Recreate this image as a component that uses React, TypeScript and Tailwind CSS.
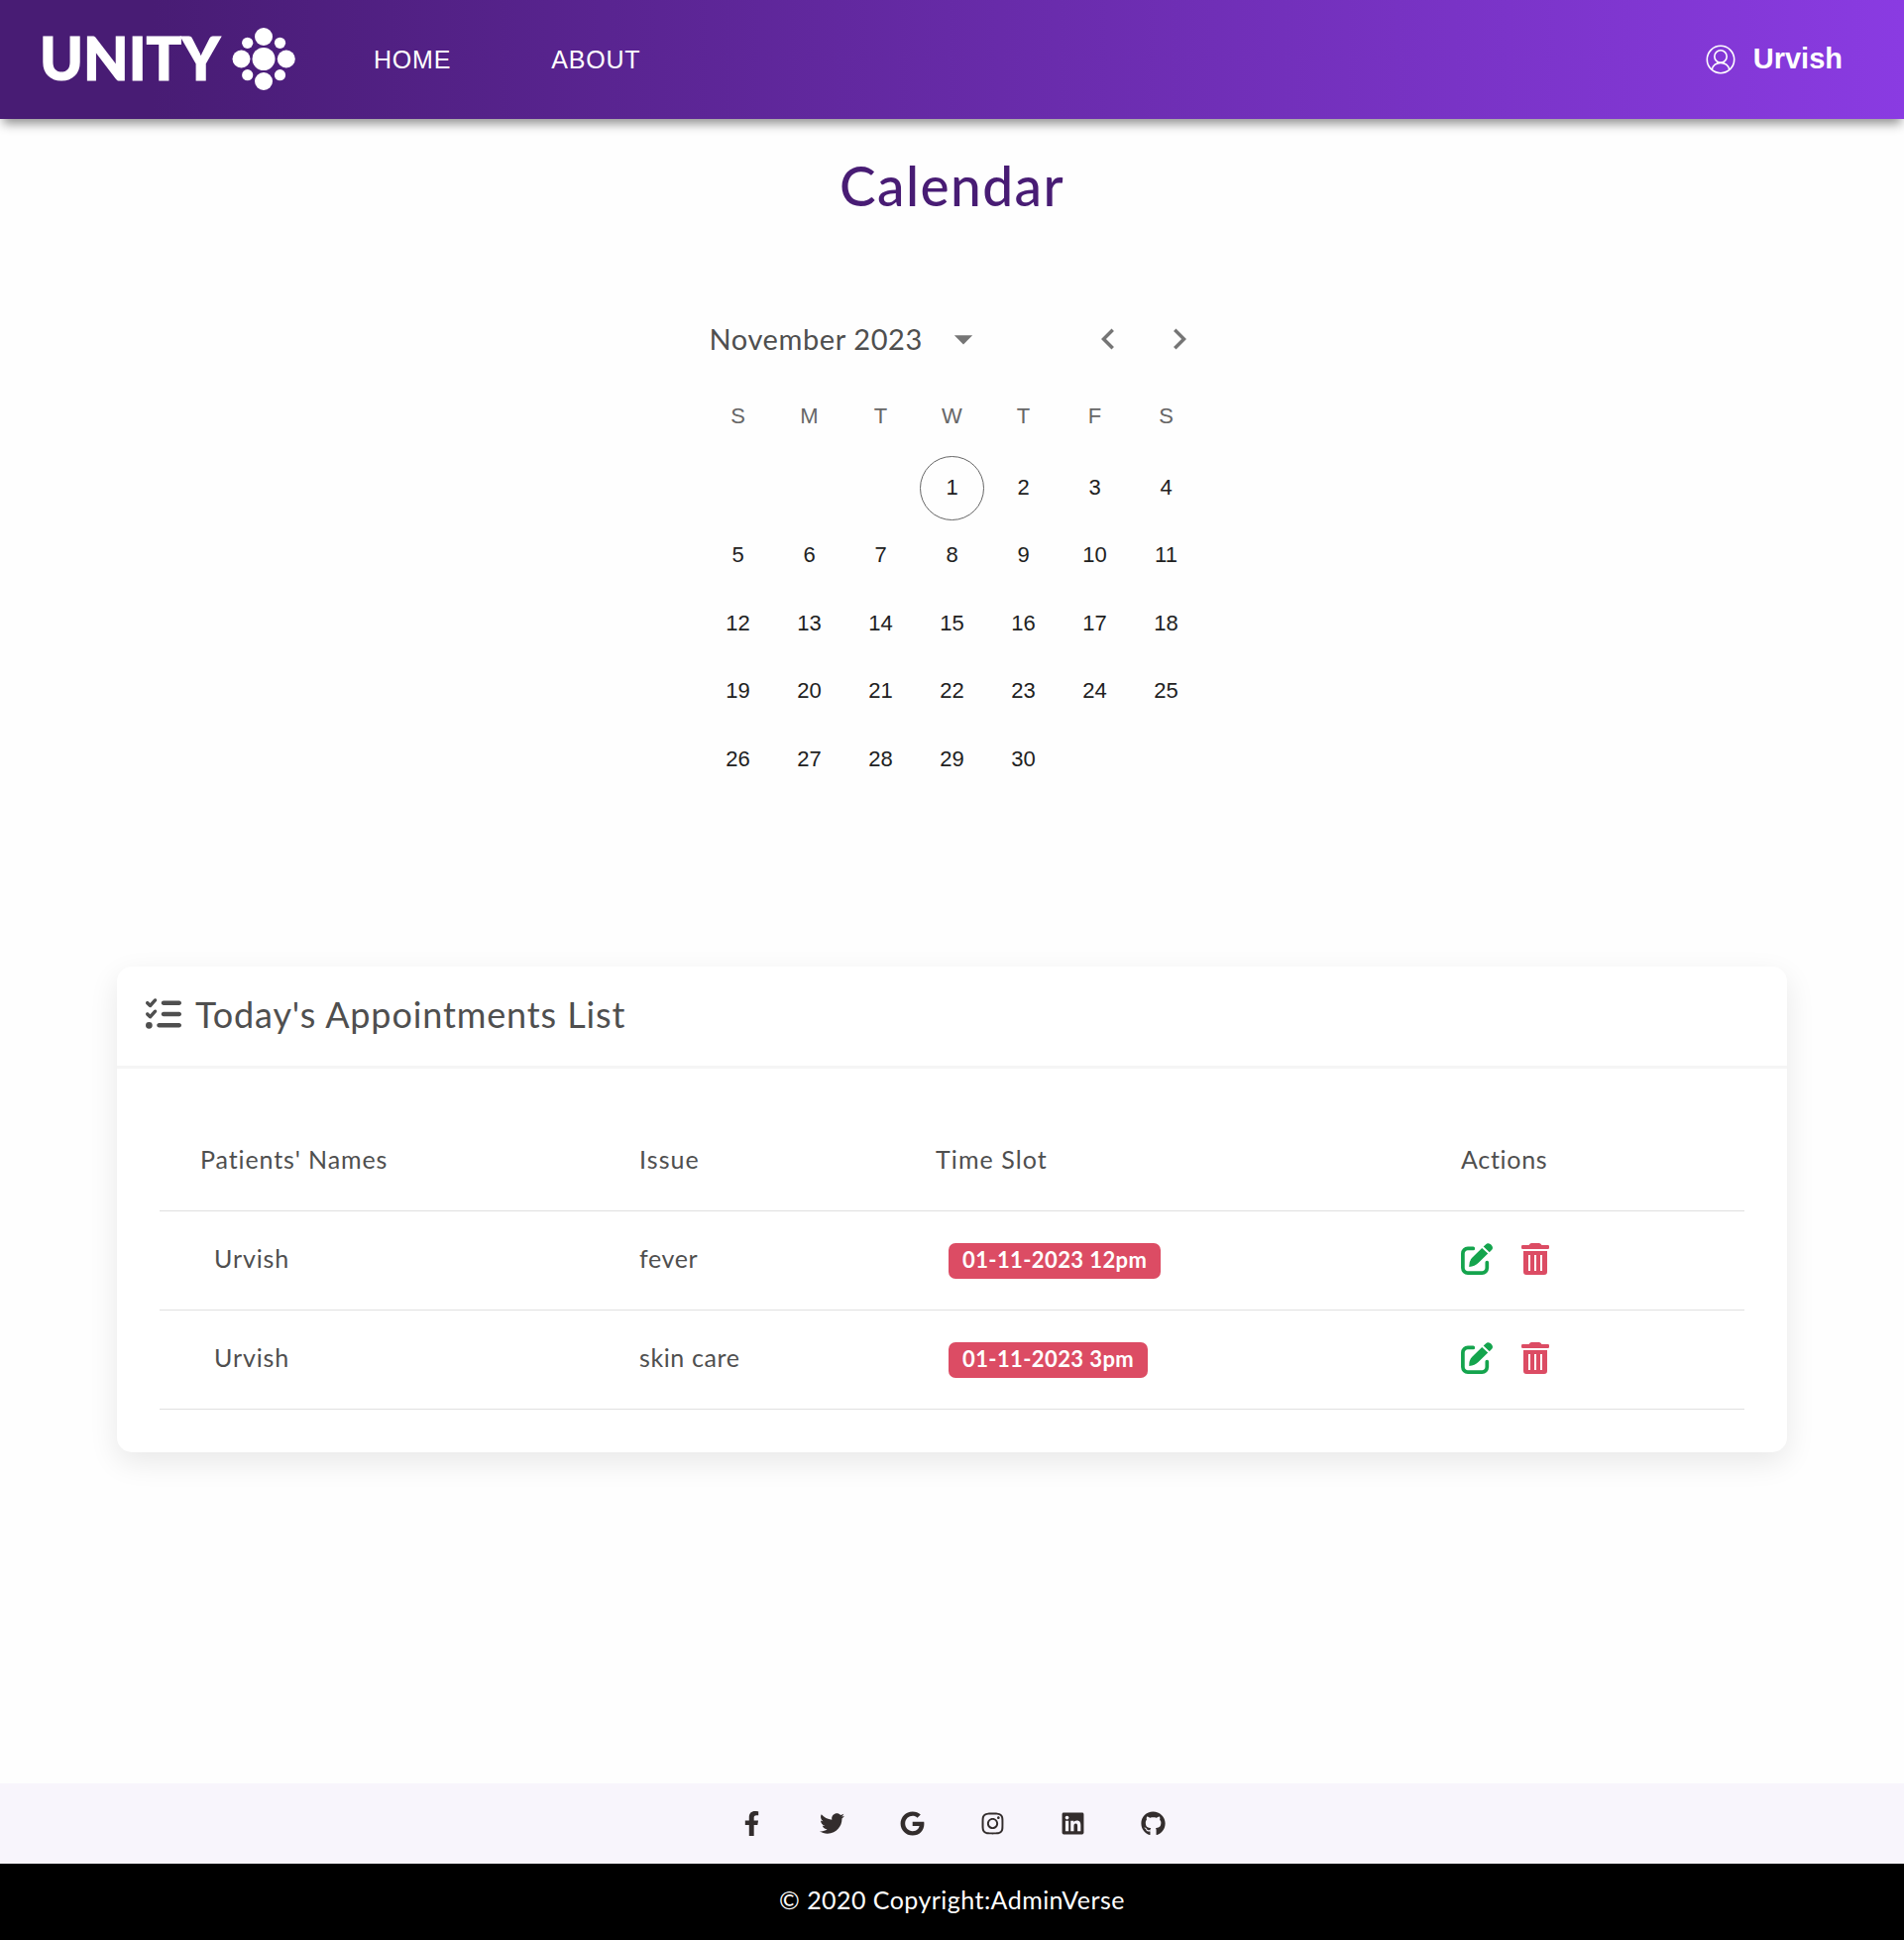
import { FaFacebookF, FaTwitter, FaGoogle, FaInstagram, FaLinkedin, FaGithub } from "react-icons/fa";
import { FaListCheck } from "react-icons/fa6";

const weekdays = ["S", "M", "T", "W", "T", "F", "S"];
const days = [0, 0, 0, ...Array.from({ length: 30 }, (_, i) => i + 1), 0, 0];
const appointments = [
  { name: "Urvish", issue: "fever", slot: "01-11-2023 12pm" },
  { name: "Urvish", issue: "skin care", slot: "01-11-2023 3pm" },
];
const social = [FaFacebookF, FaTwitter, FaGoogle, FaInstagram, FaLinkedin, FaGithub];

function Logo() {
  return (
    <svg className="-ml-[10px]" viewBox="-10 -18 265 100" width="265" height="100" fill="#fff">
      <text x="-3" y="53.300" fontFamily="Lato" fontWeight="900" fontSize="61" textLength="182" lengthAdjust="spacingAndGlyphs" stroke="#fff" strokeWidth="1.200">UNITY</text>
      <circle cx="223" cy="31.500" r="11.500" />
      <circle cx="223" cy="9" r="9" />
      <circle cx="223" cy="54" r="9" />
      <circle cx="200.500" cy="31.500" r="9" />
      <circle cx="245.800" cy="31.500" r="9" />
      <circle cx="206.700" cy="15.300" r="5.600" />
      <circle cx="239.500" cy="15.300" r="5.600" />
      <circle cx="206.700" cy="47.700" r="5.600" />
      <circle cx="239.500" cy="47.700" r="5.600" />
    </svg>
  );
}

function EditIcon() {
  return (
    <svg width="34" height="32" viewBox="0 0 34 32" fill="none">
      <path d="M12.300 5.400H6.900a5 5 0 0 0-5 5v14.700a5 5 0 0 0 5 5h14.400a5 5 0 0 0 5-5v-5.600" stroke="#14a44d" strokeWidth="3.700" strokeLinecap="round" />
      <path d="M8.300 24q-.4-6 3.200-9.400L21.200 5l6 5.600-9.700 9.400Q14 23.600 8.300 24z" fill="#14a44d" />
      <path d="M22.700 3.600l2.200-2.200c1.400-1.400 3-1.600 4.700-.4 2 1.400 3.300 4 1.600 5.700l-2.500 2.500z" fill="#14a44d" />
    </svg>
  );
}

function TrashIcon() {
  return (
    <svg width="28" height="32" viewBox="0 0 28 32" fill="#dc4c64">
      <path d="M1.200 2h6.300l1.300-1.400Q9.400 0 10.200 0h7.600q.8 0 1.400.6L20.500 2h6.300Q28 2 28 3.200v1.600Q28 6 26.800 6H1.200Q0 6 0 4.800V3.200Q0 2 1.200 2z" />
      <path fillRule="evenodd" d="M2 8h24v21q0 3-3 3H5q-3 0-3-3zM7 12v16h2V12zM13 12v16h2V12zM19 12v16h2V12z" />
    </svg>
  );
}

export default function App() {
  return (
    <div className="flex h-[1957px] w-full flex-col bg-[#fefefe] font-[Lato,sans-serif] text-[#4f4f4f]">
      <header className="flex h-[120px] shrink-0 items-center bg-[linear-gradient(90deg,#481c74_8%,#8a3be2_100%)] pr-[62px] pl-[43px] font-['Liberation_Sans',sans-serif] text-white shadow-[0_8px_10px_-3px_rgba(0,0,0,0.42)]">
        <Logo />
        <nav className="mt-[1px] ml-[79px] flex gap-[101px] text-[25px] tracking-[0.8px]">
          <a>HOME</a>
          <a>ABOUT</a>
        </nav>
        <div className="ml-auto flex items-center gap-[18px]">
          <svg width="30" height="30" viewBox="0 0 30 30" fill="none" stroke="#fff" strokeWidth="1.600">
            <circle cx="15" cy="15" r="13.700" />
            <circle cx="15" cy="12" r="6.200" />
            <path d="M6.300 25.500c.8-9.500 16.600-9.500 17.400 0" />
          </svg>
          <span className="text-[29px] font-bold">Urvish</span>
        </div>
      </header>

      <main className="flex flex-1 flex-col items-center">
        <h1 className="mt-[32px] h-[70px] text-[55px] leading-[70px] font-medium tracking-[1.4px] text-[#481c74]">Calendar</h1>

        <section className="mt-[95px] w-[504px]">
          <div className="flex h-[50px] items-center pr-[2px] pl-[7px]">
            <span className="text-[29px] tracking-[0.6px]">November 2023</span>
            <svg className="ml-[19px]" width="44" height="44" viewBox="0 0 24 24" fill="#757575"><path d="M7 10l5 5 5-5z" /></svg>
            <div className="ml-auto flex gap-[30px]">
              <svg width="42" height="42" viewBox="0 0 24 24" fill="#757575"><path d="M15.410 7.410 14 6l-6 6 6 6 1.410-1.410L10.830 12z" /></svg>
              <svg width="42" height="42" viewBox="0 0 24 24" fill="#757575"><path d="M10 6 8.590 7.410 13.170 12l-4.580 4.590L10 18l6-6z" /></svg>
            </div>
          </div>
          <div className="mt-[22px] grid grid-cols-7 font-['Liberation_Sans',sans-serif] text-[22px] text-[#666]">
            {weekdays.map((d, i) => (
              <span key={i} className="flex h-[60px] items-center justify-center">{d}</span>
            ))}
          </div>
          <div className="mt-[9px] grid auto-rows-[68.5px] grid-cols-7 font-['Liberation_Sans',sans-serif] text-[22px] text-[#212121]">
            {days.map((d, i) => (
              <span key={i} className="flex items-center justify-center">
                {d === 1 ? (
                  <span className="flex size-[65px] items-center justify-center rounded-full border border-[#666] pb-[2px]">1</span>
                ) : (
                  <span className="pb-[2px]">{d || ""}</span>
                )}
              </span>
            ))}
          </div>
        </section>

        <section className="mt-[174px] h-[490px] w-[1685px] rounded-[15px] bg-white shadow-[0_10px_30px_rgba(0,0,0,0.09)]">
          <div className="flex h-[103px] items-center gap-[14px] border-b-[3px] border-[#f5f5f5] pb-[4px] pl-[29px]">
            <FaListCheck size={36} />
            <h2 className="text-[36px] tracking-[0.88px]">Today's Appointments List</h2>
          </div>
          <table className="mt-[44px] ml-[43px] w-[1599px] table-fixed text-left text-[25px]">
            <thead>
              <tr className="h-[100px] border-b border-[#e0e0e0]">
                <th className="w-[484px] pb-[3px] pl-[41px] font-normal tracking-[0.9px]">Patients' Names</th>
                <th className="w-[299px] pb-[3px] font-normal tracking-[1.1px]">Issue</th>
                <th className="w-[530px] pb-[3px] font-normal tracking-[1.1px]">Time Slot</th>
                <th className="pb-[3px] font-normal tracking-[0.7px]">Actions</th>
              </tr>
            </thead>
            <tbody>
              {appointments.map((a) => (
                <tr key={a.slot} className="h-[100px] border-b border-[#e0e0e0]">
                  <td className="pb-[3px] pl-[55px] tracking-[0.9px]">{a.name}</td>
                  <td className="pb-[3px] tracking-[0.6px]">{a.issue}</td>
                  <td className="pb-[2px] pl-[13px]">
                    <span className="inline-flex h-[36px] items-center rounded-[7px] bg-[#dc4c64] px-[14px] pb-[4px] align-middle text-[22px] font-bold tracking-[0.4px] text-white">{a.slot}</span>
                  </td>
                  <td className="pb-[3px]">
                    <div className="flex items-center gap-[27px]">
                      <EditIcon />
                      <TrashIcon />
                    </div>
                  </td>
                </tr>
              ))}
            </tbody>
          </table>
        </section>
      </main>

      <footer className="shrink-0">
        <div className="flex h-[81px] items-center justify-center bg-[#f8f5fc] text-[25px] text-[#332d2d]">
          {social.map((Icon, i) => (
            <a key={i} className="flex w-[81px] justify-center"><Icon /></a>
          ))}
        </div>
        <div className="flex h-[77px] items-center justify-center bg-black pb-[3px] text-[25px] tracking-[0.45px] text-white">© 2020 Copyright:AdminVerse</div>
      </footer>
    </div>
  );
}
